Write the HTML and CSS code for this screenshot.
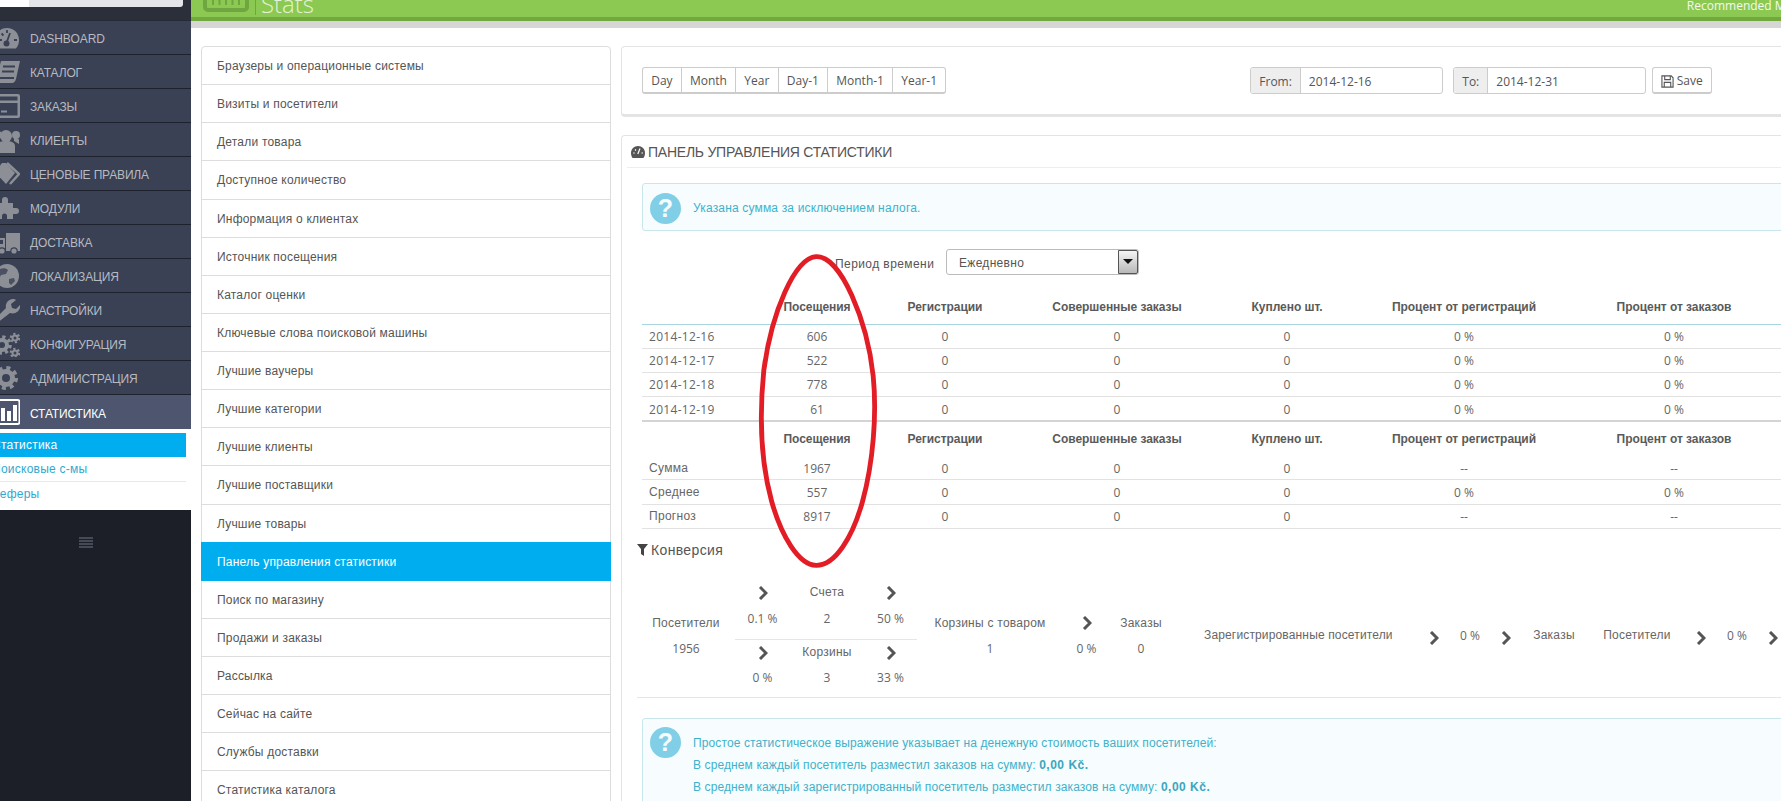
FILE: index.html
```html
<!DOCTYPE html>
<html lang="ru">
<head>
<meta charset="utf-8">
<title>Stats</title>
<link rel="stylesheet" href="styles.css">
</head>
<body>
<div class="page">
  <aside class="side">
    <div class="side-top"><div class="search"><div class="search-white"></div></div></div>
    <ul class="menu">
      <li class="mi"><svg class="ic" viewBox="0 0 26 26"><path d="M13 3C6 3 1 8.500 1 15c0 3.500 1 6 3 8.500h18c2-2.500 3-5 3-8.500C25 8.500 20 3 13 3z"/><path class="cutl" d="M12.500 18l3.500-10M5 15h3M7.500 8.500l2 2M13 5v3M20 15h3"/><circle class="cut" cx="12.500" cy="18.500" r="3"/></svg><span>DASHBOARD</span></li>
      <li class="mi"><svg class="ic" viewBox="0 0 26 26"><path d="M7 2h19l-4 18c-.5 2-2 4-4 4H5c-2 0-3-1-3-3z"/><path class="cutl" d="M9 7.500h12M8 12.500h12M5 19h15"/></svg><span>КАТАЛОГ</span></li>
      <li class="mi"><svg class="ic" viewBox="0 0 26 26"><path d="M2 1h22a2 2 0 0 1 2 2v20a2 2 0 0 1-2 2H2a2 2 0 0 1-2-2V3a2 2 0 0 1 2-2zm0 2.500v4h21.500v-4zm0 6.500v12.500h21.500V10zm5 7.500h6v2H7z" fill-rule="evenodd"/></svg><span>ЗАКАЗЫ</span></li>
      <li class="mi"><svg class="ic" viewBox="0 0 26 26"><circle cx="12" cy="9" r="6"/><circle cx="4" cy="8" r="4"/><circle cx="22" cy="8" r="4"/><path d="M3 26v-7c0-3 3-5 9-5s9 2 9 5v7z"/><path d="M0 19v-5c0-1 1-3 5-3v3zM25 17v-4c0-1-1-2-5-2v3z"/></svg><span>КЛИЕНТЫ</span></li>
      <li class="mi"><svg class="ic" viewBox="0 0 26 26"><path d="M1 11L8 2h4l9 10-9 11z"/><path class="tagl" d="M13 2l12 11-9 10"/></svg><span>ЦЕНОВЫЕ ПРАВИЛА</span></li>
      <li class="mi"><svg class="ic" viewBox="0 0 26 26"><path d="M2 8h6V5a3 3 0 0 1 6 0v3h5v5h3a3 3 0 0 1 0 6h-3v5h-6v-3a2.500 2.500 0 0 0-5 0v3H2z"/></svg><span>МОДУЛИ</span></li>
      <li class="mi"><svg class="ic" viewBox="0 0 26 26"><path d="M12 4h14v18H12zM0 9h11v13H0z"/><path class="cut" d="M4 11h5v4H4z"/><circle class="cut" cx="8" cy="22" r="3.800"/><circle class="cut" cx="20" cy="22" r="3.800"/><circle cx="8" cy="22" r="2.600"/><circle cx="20" cy="22" r="2.600"/></svg><span>ДОСТАВКА</span></li>
      <li class="mi"><svg class="ic" viewBox="0 0 26 26"><circle cx="13" cy="13" r="12"/><path class="sea" d="M6 6c3-1 6-1 8 1l-2 4-5 1-2 4c-2-3-1-7 1-10zM15 16l5-1 1 3-4 4-2-2z"/></svg><span>ЛОКАЛИЗАЦИЯ</span></li>
      <li class="mi"><svg class="ic" viewBox="0 0 26 26"><path d="M3 26l-3-3 12-12c-1-4 2-9 7-9 1 0 2 0 3 1l-5 4 1 4 4 1 4-4c1 5-4 10-10 8z"/></svg><span>НАСТРОЙКИ</span></li>
      <li class="mi"><svg class="ic" viewBox="0 0 26 26"><circle class="teeth-b" cx="8" cy="14" r="8"/><circle cx="8" cy="14" r="7"/><circle class="cut" cx="8" cy="14" r="3"/><circle class="teeth-s" cx="21" cy="7" r="4"/><circle cx="21" cy="7" r="3.500"/><circle class="cut" cx="21" cy="7" r="1.500"/><circle class="teeth-s" cx="21" cy="22" r="4"/><circle cx="21" cy="22" r="3.500"/><circle class="cut" cx="21" cy="22" r="1.500"/></svg><span>КОНФИГУРАЦИЯ</span></li>
      <li class="mi"><svg class="ic" viewBox="0 0 26 26"><circle class="teeth-l" cx="12" cy="13" r="10"/><circle cx="12" cy="13" r="9"/><circle class="cut" cx="12" cy="13" r="4"/></svg><span>АДМИНИСТРАЦИЯ</span></li>
      <li class="mi mi-on"><svg class="ic chart" viewBox="0 0 26 26"><rect class="chart-box" x="0" y="1" width="25.500" height="24" rx="2"/><path class="chart-bar" d="M7 9h4v13H7zM13 12h4v10h-4zM19 6h4v16h-4z"/></svg><span>СТАТИСТИКА</span></li>
    </ul>
    <ul class="sub">
      <li class="si si-on">Статистика</li>
      <li class="si si-line">Поисковые с-мы</li>
      <li class="si">Реферы</li>
    </ul>
    <div class="burger"><i></i><i></i><i></i><i></i></div>
  </aside>

  <div class="right">
    <header class="head">
      <svg class="head-ic" viewBox="0 0 46 14"><rect x="2" y="-10" width="42" height="20" rx="3"/><path class="head-bars" d="M10 -2v7M16.500 -2v7M23 -2v7M29.500 -2v7M36 -2v7"/></svg>
      <span class="head-sep"></span>
      <span class="head-title">Stats</span>
      <span class="head-link">Recommended Modules</span>
    </header>

    <div class="content">
      <nav class="list">
        <a class="row">Браузеры и операционные системы</a>
        <a class="row">Визиты и посетители</a>
        <a class="row">Детали товара</a>
        <a class="row">Доступное количество</a>
        <a class="row">Информация о клиентах</a>
        <a class="row">Источник посещения</a>
        <a class="row">Каталог оценки</a>
        <a class="row">Ключевые слова поисковой машины</a>
        <a class="row">Лучшие ваучеры</a>
        <a class="row">Лучшие категории</a>
        <a class="row">Лучшие клиенты</a>
        <a class="row">Лучшие поставщики</a>
        <a class="row">Лучшие товары</a>
        <a class="row row-on">Панель управления статистики</a>
        <a class="row">Поиск по магазину</a>
        <a class="row">Продажи и заказы</a>
        <a class="row">Рассылка</a>
        <a class="row">Сейчас на сайте</a>
        <a class="row">Службы доставки</a>
        <a class="row">Статистика каталога</a>
      </nav>

      <div class="col">
        <section class="tools">
          <div class="btns">
            <button class="b">Day</button><button class="b">Month</button><button class="b">Year</button><button class="b">Day-1</button><button class="b">Month-1</button><button class="b">Year-1</button>
          </div>
          <div class="dates">
            <div class="ig ig-from"><span class="ig-l">From:</span><span class="ig-v">2014-12-16</span></div>
            <div class="ig ig-to"><span class="ig-l">To:</span><span class="ig-v">2014-12-31</span></div>
            <button class="save"><svg class="save-ic" viewBox="0 0 14 14"><path d="M1 1h10l2 2v10H1zM4 1v4h6V1M3.500 13V8h7v5"/></svg>Save</button>
          </div>
        </section>

        <section class="panel">
          <h3 class="panel-h"><svg class="gauge" viewBox="0 0 14 12"><path d="M7 0C3 0 0 3 0 7c0 2 .6 3.600 1.600 5h10.800c1-1.400 1.600-3 1.600-5 0-4-3-7-7-7z"/><path class="gauge-cut" d="M6.800 8L9 2.500M2.200 7h1.500M4 3.500l1 1M10.500 7h1.500"/></svg>ПАНЕЛЬ УПРАВЛЕНИЯ СТАТИСТИКИ</h3>

          <div class="info info-one"><span class="q">?</span><span class="info-txt">Указана сумма за исключением налога.</span></div>

          <div class="period">
            <span class="period-l">Период времени</span>
            <div class="sel"><span class="sel-t">Ежедневно</span><span class="sel-b"></span></div>
          </div>

          <table class="t">
            <colgroup><col class="c1"><col class="c2"><col class="c3"><col class="c4"><col class="c5"><col class="c6"><col class="c7"></colgroup>
            <thead>
              <tr class="hr hr-top"><th></th><th>Посещения</th><th>Регистрации</th><th>Совершенные заказы</th><th>Куплено шт.</th><th>Процент от регистраций</th><th>Процент от заказов</th></tr>
            </thead>
            <tbody>
              <tr class="dr"><td class="lab num">2014-12-16</td><td class="num">606</td><td class="num">0</td><td class="num">0</td><td class="num">0</td><td class="num">0 %</td><td class="num">0 %</td></tr>
              <tr class="dr"><td class="lab num">2014-12-17</td><td class="num">522</td><td class="num">0</td><td class="num">0</td><td class="num">0</td><td class="num">0 %</td><td class="num">0 %</td></tr>
              <tr class="dr"><td class="lab num">2014-12-18</td><td class="num">778</td><td class="num">0</td><td class="num">0</td><td class="num">0</td><td class="num">0 %</td><td class="num">0 %</td></tr>
              <tr class="dr dr-end"><td class="lab num">2014-12-19</td><td class="num">61</td><td class="num">0</td><td class="num">0</td><td class="num">0</td><td class="num">0 %</td><td class="num">0 %</td></tr>
              <tr class="hr hr-two"><th></th><th>Посещения</th><th>Регистрации</th><th>Совершенные заказы</th><th>Куплено шт.</th><th>Процент от регистраций</th><th>Процент от заказов</th></tr>
              <tr class="dr dr-sum"><td class="lab">Сумма</td><td class="num">1967</td><td class="num">0</td><td class="num">0</td><td class="num">0</td><td class="num">--</td><td class="num">--</td></tr>
              <tr class="dr dr-avg"><td class="lab">Среднее</td><td class="num">557</td><td class="num">0</td><td class="num">0</td><td class="num">0</td><td class="num">0 %</td><td class="num">0 %</td></tr>
              <tr class="dr"><td class="lab">Прогноз</td><td class="num">8917</td><td class="num">0</td><td class="num">0</td><td class="num">0</td><td class="num">--</td><td class="num">--</td></tr>
            </tbody>
          </table>

          <h4 class="conv-h"><svg class="funnel" viewBox="0 0 11 12"><path d="M0 0h11L7 5v7L4 10V5z"/></svg>Конверсия</h4>

          <div class="conv">
            <div class="cv cv-vis"><div>Посетители</div><div class="num">1956</div></div>
            <div class="cv-mid">
              <div class="tri tri-a">
                <div class="chev-cell"><svg class="chev" viewBox="0 0 10 14"><path d="M2 1l6 6-6 6"/></svg></div><div>Счета</div><div class="chev-cell"><svg class="chev" viewBox="0 0 10 14"><path d="M2 1l6 6-6 6"/></svg></div>
                <div class="num">0.1 %</div><div class="num">2</div><div class="num">50 %</div>
              </div>
              <div class="tri">
                <div class="chev-cell"><svg class="chev" viewBox="0 0 10 14"><path d="M2 1l6 6-6 6"/></svg></div><div>Корзины</div><div class="chev-cell"><svg class="chev" viewBox="0 0 10 14"><path d="M2 1l6 6-6 6"/></svg></div>
                <div class="num">0 %</div><div class="num">3</div><div class="num">33 %</div>
              </div>
            </div>
            <div class="cv cv-cart"><div>Корзины с товаром</div><div class="num">1</div></div>
            <div class="cv cv-ch"><div class="chev-cell"><svg class="chev" viewBox="0 0 10 14"><path d="M2 1l6 6-6 6"/></svg></div><div class="num">0 %</div></div>
            <div class="cv cv-ord"><div>Заказы</div><div class="num">0</div></div>
            <div class="flat">
              <span class="f f-reg">Зарегистрированные посетители</span>
              <span class="f f-c1 chev-cell"><svg class="chev" viewBox="0 0 10 14"><path d="M2 1l6 6-6 6"/></svg></span>
              <span class="f f-p1 num">0 %</span>
              <span class="f f-c2 chev-cell"><svg class="chev" viewBox="0 0 10 14"><path d="M2 1l6 6-6 6"/></svg></span>
              <span class="f f-o">Заказы</span>
              <span class="f f-v">Посетители</span>
              <span class="f f-c3 chev-cell"><svg class="chev" viewBox="0 0 10 14"><path d="M2 1l6 6-6 6"/></svg></span>
              <span class="f f-p2 num">0 %</span>
              <span class="f f-c4 chev-cell"><svg class="chev" viewBox="0 0 10 14"><path d="M2 1l6 6-6 6"/></svg></span>
            </div>
          </div>

          <div class="info info-two"><span class="q q-two">?</span>
            <div class="info-lines">
              <p>Простое статистическое выражение указывает на денежную стоимость ваших посетителей:</p>
              <p>В среднем каждый посетитель разместил заказов на сумму: <b>0,00 Kč.</b></p>
              <p>В среднем каждый зарегистрированный посетитель разместил заказов на сумму: <b>0,00 Kč.</b></p>
            </div>
          </div>
        </section>
      </div>
    </div>
  </div>

  <svg class="mark" viewBox="0 0 124 324"><path d="M60 2.500C38 4 14 60 6 120 1 170 3 215 14 255c10 36 28 66 46 66.500 20 .5 38-30 48-66 11-40 15-90 11-130C113 70 86 1 60 2.500z"/></svg>
</div>
</body>
</html>
```

FILE: styles.css
```css
* { box-sizing: border-box; }
html, body { margin: 0; height: 801px; overflow: hidden; background: #fff; }
body { font: 12px/1.42857 "Liberation Sans", Arial, sans-serif; color: #555; }
ul { list-style: none; margin: 0; padding: 0; }
.num { font-family: "Open Sans", sans-serif; }

.page { position: relative; display: flex; width: 1781px; height: 801px; overflow: hidden; }

/* sidebar */
.side { flex: 0 0 191px; background: #1c1f27; overflow: hidden; }
.side-top { height: 21px; background: #2b2f3a; border-bottom: 1px solid #262a34; }
.search { width: 183px; height: 7px; background: #e3e5e9; border-radius: 0 0 3px 0; }
.search-white { width: 29px; height: 7px; background: #fff; }
.mi { display: flex; align-items: center; height: 34px; background: #3a4154; border-bottom: 1px solid #1e222c; color: #b7bac2; font-size: 12px; letter-spacing: -.15px; }
.mi span { padding-top: 5px; }
.mi-on { background: #4d566e; color: #fff; border-bottom: 0; }
.ic { flex: none; width: 26px; height: 26px; margin-left: -6px; margin-right: 10px; fill: #8c8f96; }
.cut { fill: #3a4154; }
.sea { fill: #4c5161; }
.cutl { stroke: #3a4154; stroke-width: 1.8; fill: none; }
.tagl { fill: none; stroke: #8c8f96; stroke-width: 2.500; }
.teeth-b, .teeth-s, .teeth-l { fill: none; stroke: #8c8f96; }
.teeth-b { stroke-width: 3.500; stroke-dasharray: 3.140 3.140; }
.teeth-l { stroke-width: 4; stroke-dasharray: 3.930 3.930; }
.teeth-s { stroke-width: 2.600; stroke-dasharray: 2.090 2.090; }
.chart { fill: none; }
.chart-box { stroke: #fff; stroke-width: 2; fill: none; }
.chart-bar { fill: #fff; }

.sub { background: #fff; padding: 4px 5px 5px 0; height: 81px; }
.si { height: 24px; line-height: 24px; text-indent: -8px; color: #2fa9cf; letter-spacing: .25px; }
.si-on { background: #00aeef; color: #fff; }
.si-line { height: 25px; border-bottom: 1px solid #dcedf3; }
.burger { display: flex; flex-direction: column; gap: 1px; width: 14px; margin: 27px 0 0 79px; }
.burger i { display: block; height: 2px; background: #454a55; }

/* right side */
.right { flex: 1; min-width: 0; }
.head { position: relative; display: flex; align-items: flex-start; height: 28px; background: #8bc953; overflow: hidden; }
.head::after { content: ""; position: absolute; left: 0; right: 0; top: 17px; height: 11px; background: #d6d6d6; border-top: 4px solid #72a93f; }
.head-ic { flex: none; width: 46px; height: 14px; margin-left: 12px; fill: none; stroke: #6fa63f; stroke-width: 4; }
.head-bars { stroke-width: 2; }
.head-sep { flex: none; width: 1px; height: 15px; margin-left: 6px; background: #6fa63f; }
.head-title { margin: -13px 0 0 5px; font: 300 24px/34px "Open Sans", sans-serif; color: #e2f2d3; }
.head-link { margin-left: auto; margin-right: -42px; font: 12px/12px "Open Sans", sans-serif; color: #f4faee; }

.content { display: flex; align-items: flex-start; padding: 18px 0 0 10px; }

.list { flex: 0 0 410px; border: 1px solid #ddd; border-radius: 4px 4px 0 0; }
.row { display: block; height: 38.14px; padding: 11px 15px 9px; border-bottom: 1px solid #ddd; color: #555; letter-spacing: .2px; line-height: 16.500px; }
.row-on { background: #00aeef; color: #fff; margin: -1px -1px 0; padding: 12px 16px 10px; height: 39.14px; border-bottom: 0; }

.col { flex: 0 0 1220px; margin-left: 10px; }

.tools { display: flex; align-items: flex-start; height: 71px; padding: 20px 0 0 20px; border: 1px solid #e4e4e4; border-bottom: 3px solid #e4e4e4; border-right: 0; border-radius: 4px 0 0 4px; }
.btns { display: flex; }
.b { height: 27px; padding: 2px 8.200px 0; margin: 0 0 0 -1px; border: 1px solid #ccc; border-bottom-width: 2px; background: #fff; color: #555; font: 12px/1 "Open Sans", sans-serif; }
.b:first-child { margin-left: 0; border-radius: 3px 0 0 3px; }
.b:last-child { border-radius: 0 3px 3px 0; }
.dates { display: flex; margin-left: 304px; }
.ig { display: flex; height: 27px; border: 1px solid #ccc; border-radius: 3px; font: 12px/23px "Open Sans", sans-serif; color: #555; }
.ig-from { width: 193px; }
.ig-to { width: 193px; margin-left: 10px; }
.ig-l { background: #eee; border-right: 1px solid #ccc; padding: 2px 8px 0; border-radius: 3px 0 0 3px; }
.ig-v { padding: 2px 8px 0; }
.save { display: flex; align-items: center; justify-content: center; gap: 3px; width: 60px; height: 27px; margin-left: 5.500px; padding: 2px 0 0; border: 1px solid #ccc; border-bottom-width: 2px; border-radius: 3px; background: #fff; color: #555; font: 12px/1 "Open Sans", sans-serif; }
.save-ic { width: 13px; height: 13px; fill: none; stroke: #555; stroke-width: 1.200; }

.panel { margin-top: 18px; padding: 0 0 0 20px; border: 1px solid #e4e4e4; border-right: 0; border-radius: 4px 0 0 0; }
.panel-h { display: flex; align-items: center; height: 32px; margin: 0 0 15px -15px; padding-left: 4px; border-bottom: 1px solid #eee; font: 400 14px/1 "Liberation Sans", sans-serif; color: #555; letter-spacing: -.24px; }
.gauge { width: 14px; height: 12px; margin-right: 3px; fill: #555; }
.gauge-cut { stroke: #fff; stroke-width: 1.200; fill: none; }

.info { display: flex; background: #f7fcfe; border: 1px solid #c8e7ed; border-radius: 3px; color: #3db2cb; }
.info-one { align-items: center; height: 48px; padding: 2px 0 0 7px; letter-spacing: .17px; }
.info-txt { padding-top: 2px; }
.q { display: block; flex: none; width: 31px; height: 31px; margin-right: 12px; border-radius: 50%; background: #81cfe6; color: #f7fcfe; font: 700 25px/31px "Liberation Sans", sans-serif; text-align: center; letter-spacing: 0; }
.period { display: flex; align-items: center; height: 26px; margin-top: 18px; padding-left: 193px; }
.period-l { width: 102px; padding-top: 5px; letter-spacing: .42px; color: #555; white-space: nowrap; }
.sel { display: flex; justify-content: space-between; width: 193px; height: 26px; margin-left: 9px; background: #fff; border: 1px solid #bbb; border-radius: 3px; }
.sel-t { padding-left: 12px; line-height: 27px; letter-spacing: .3px; }
.sel-b { position: relative; width: 20px; height: 24px; background: linear-gradient(#f4f4f4, #b8b8b8); border: 1px solid #555; border-radius: 0 2px 2px 0; }
.sel-b::after { content: ""; position: absolute; left: 4px; top: 8px; border: 5px solid transparent; border-top: 5px solid #111; border-bottom: 0; }

.t { width: 1171px; margin-top: 17px; border-collapse: collapse; table-layout: fixed; color: #666; }
.c1 { width: 115px; } .c2 { width: 120px; } .c3 { width: 136px; } .c4 { width: 208px; }
.c5 { width: 132px; } .c6 { width: 222px; } .c7 { width: 238px; }
.t th { padding: 0; font-weight: 700; text-align: center; color: #5a5a5a; letter-spacing: -.05px; }
.t td { padding: 2px 0 0; text-align: center; }
.t th:last-child, .t td:last-child { padding-right: 40px; }
.hr { height: 32px; }
.hr-top { border-bottom: 1px solid #a9d5df; }
.hr-two { height: 35px; }
.hr-two th { padding-top: 2px; }
.dr { height: 24px; border-bottom: 1px solid #e2e2e2; }
.dr-end { height: 25px; border-bottom: 2px solid #d4d4d4; }
.dr-sum { height: 23px; }
.dr-avg { height: 25px; }
.t td.lab { padding-left: 7px; text-align: left; letter-spacing: .3px; }

.conv-h { display: flex; align-items: center; height: 20px; margin: 11px 0 0 -5px; font: 400 14px/20px "Liberation Sans", sans-serif; color: #555; letter-spacing: .35px; }
.funnel { width: 11px; height: 12px; margin-right: 3px; fill: #444; }

.conv { display: flex; align-items: center; height: 138px; margin: 0 0 0 -5px; padding-top: 15px; border-bottom: 1px solid #e6e6e6; color: #666; text-align: center; letter-spacing: .25px; }
.conv .num { letter-spacing: 0; }
.cv > div { height: 26px; line-height: 26px; }
.cv-vis { flex: 0 0 98px; }
.cv-mid { flex: 0 0 182px; }
.tri { display: grid; grid-template-columns: 55px 74px 53px; grid-auto-rows: 25.500px; align-items: center; }
.tri-a { height: 59.500px; padding-bottom: 8px; border-bottom: 1px solid #e6e6e6; }
.cv-cart { flex: 0 0 146px; }
.cv-ch { flex: 0 0 47px; }
.cv-ord { flex: 0 0 62px; }
.chev-cell { display: flex; align-items: center; justify-content: center; }
.chev { width: 10px; height: 14px; fill: none; stroke: #555; stroke-width: 3; }
.flat { display: flex; align-items: center; height: 26px; }
.f { flex: none; }
.f-reg { width: 221px; padding-left: 32px; text-align: left; white-space: nowrap; letter-spacing: .15px; }
.f-c1, .f-c2, .f-c3, .f-c4 { width: 10px; margin-top: 4px; }
.f-c1 { margin-left: 36px; }
.f-p1 { width: 62px; }
.f-p2 { width: 62px; }
.f-o { width: 86px; }
.f-v { width: 80px; }
.f-c3 { margin-left: 19px; }

.info-two { height: 90px; margin-top: 20px; padding: 8px 0 0 7px; letter-spacing: .11px; }
.info-lines p { height: 22px; margin: 5px 0 -5px; line-height: 22px; }
.info-lines b { color: #3aa7bf; letter-spacing: .5px; }

/* hand-drawn annotation over the table */
.mark { position: absolute; left: 758px; top: 250px; width: 120px; height: 322px; fill: none; stroke: #e21d26; stroke-width: 5; }
```
